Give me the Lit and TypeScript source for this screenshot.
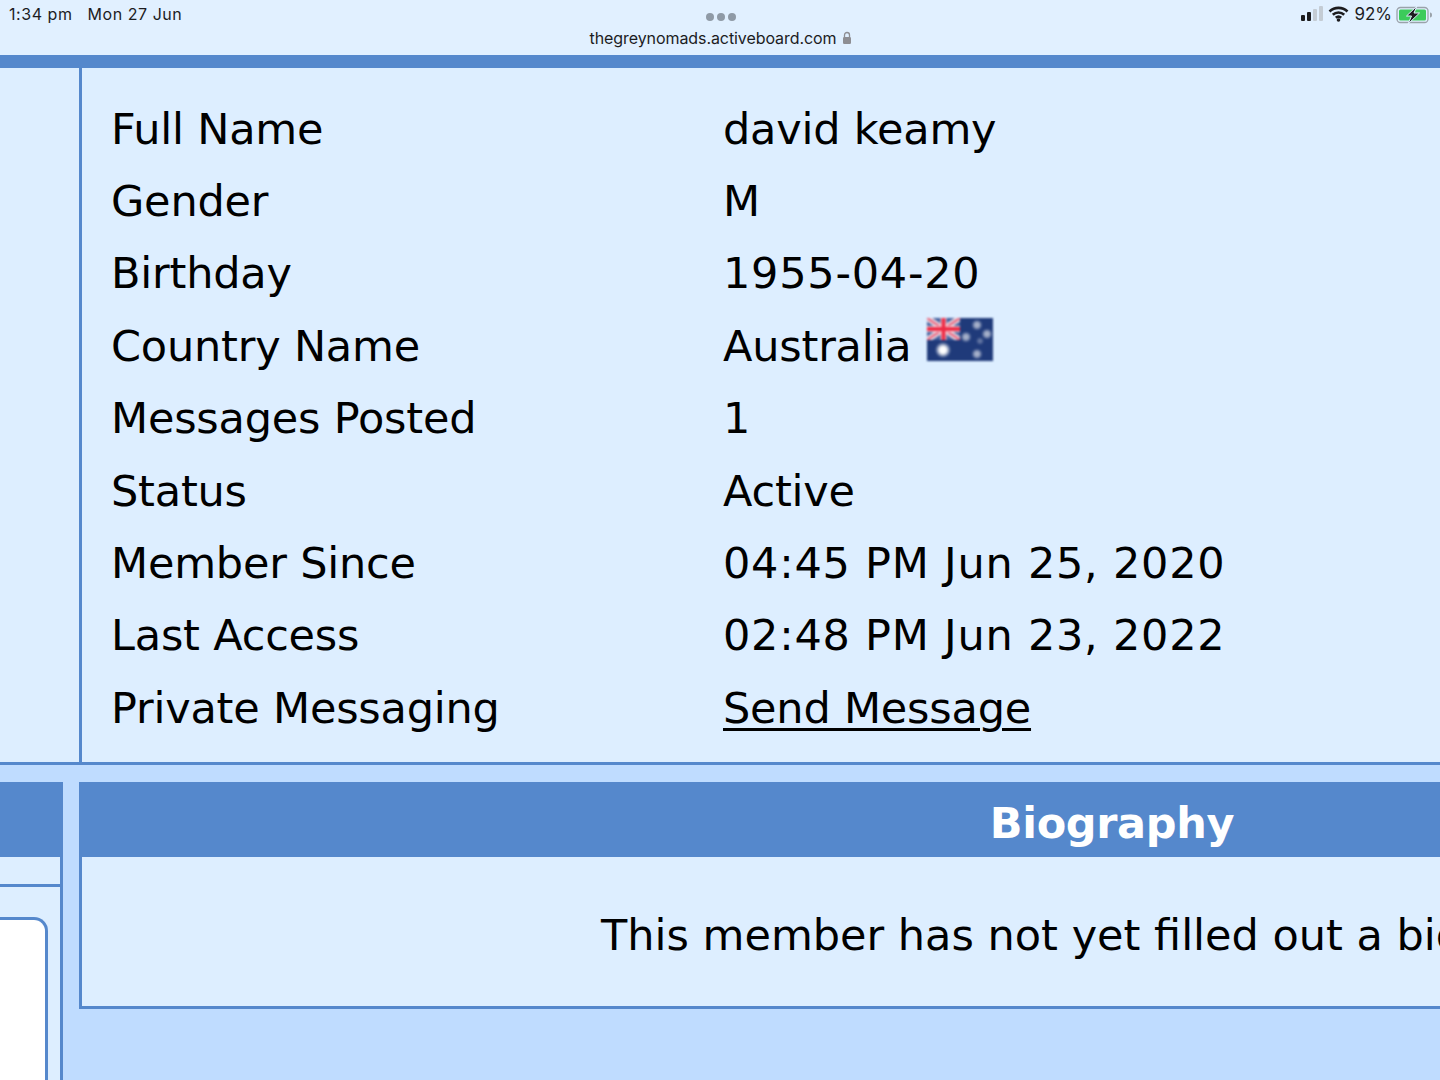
import {LitElement, html, css} from "lit"
import {customElement} from "lit/decorators.js"

const rows: [string, string][] = [
    ["Full Name", "david keamy"],
    ["Gender", "M"],
    ["Birthday", "1955-04-20"],
    ["Country Name", "Australia"],
    ["Messages Posted", "1"],
    ["Status", "Active"],
    ["Member Since", "04:45 PM Jun 25, 2020"],
    ["Last Access", "02:48 PM Jun 23, 2022"],
    ["Private Messaging", "Send Message"],
]

const flag = html`
    <svg class="flag" viewBox="0 0 66 43" aria-hidden="true">
        <defs>
            <radialGradient id="star">
                <stop offset="0.4" stop-color="#ffffff"/>
                <stop offset="1" stop-color="#ffffff" stop-opacity="0"/>
            </radialGradient>
            <clipPath id="jack"><rect width="33" height="22"/></clipPath>
        </defs>
        <rect width="66" height="43" fill="#1f3a7a"/>
        <g clip-path="url(#jack)">
            <rect width="33" height="22" fill="#3f5f9e"/>
            <path d="M0 0L33 22M33 0L0 22" stroke="#ecd8e0" stroke-width="6"/>
            <path d="M0 0L33 22M33 0L0 22" stroke="#e8607a" stroke-width="2"/>
            <path d="M16.500 0V22M0 11H33" stroke="#f4dce2" stroke-width="6"/>
            <path d="M16.500 0V22M0 11H33" stroke="#ee2b45" stroke-width="4"/>
        </g>
        <circle cx="16" cy="32" r="8" fill="url(#star)"/>
        <circle cx="50" cy="7" r="5.500" fill="url(#star)" opacity="0.6"/>
        <circle cx="39" cy="19" r="5.500" fill="url(#star)" opacity="0.6"/>
        <circle cx="60" cy="16" r="5.500" fill="url(#star)" opacity="0.6"/>
        <circle cx="53" cy="23" r="4" fill="url(#star)" opacity="0.3"/>
        <circle cx="50" cy="36" r="5.500" fill="url(#star)" opacity="0.6"/>
    </svg>
`

@customElement("app-root")
export class AppRoot extends LitElement {
    static styles = css`
        :host {
            display: block;
            width: 1440px;
            height: 1080px;
            overflow: hidden;
            background: #bfdcff;
            color: #000;
            font-family: "DejaVu Sans", Verdana, sans-serif;
        }
        .status {
            height: 55px;
            box-sizing: border-box;
            background: #e1f0ff;
            display: grid;
            grid-template-columns: 1fr auto 1fr;
            padding: 4px 7px 0 9px;
            font-family: Inter, "Liberation Sans", Arial, sans-serif;
            font-size: 16px;
            color: #1c1c1e;
        }
        .clock { display: flex; gap: 15px; line-height: 20px; letter-spacing: 0.55px; }
        .address { display: flex; flex-direction: column; align-items: center; }
        .dots { display: flex; gap: 3px; height: 8px; margin: 9px 0 7px; }
        .dots i { width: 8px; height: 8px; border-radius: 50%; background: #8f9aa6; }
        .url { display: flex; align-items: center; gap: 6px; line-height: 20px; letter-spacing: -0.08px; }
        .lock { width: 10px; height: 14px; }
        .indicators { display: flex; justify-content: flex-end; align-items: flex-start; gap: 4px; line-height: 20px; font-size: 17px; }
        .indicators svg { margin-top: 2px; flex: none; }
        .strip { height: 13px; background: #5588cc; }
        .profile {
            height: 694px;
            background: #ddeeff;
            border-bottom: 3px solid #5588cc;
            padding-left: 79px;
        }
        .details {
            height: 100%;
            box-sizing: border-box;
            border-left: 3px solid #5588cc;
            padding: 24.500px 0 0 29px;
            display: grid;
            grid-template-columns: 612px 1fr;
            grid-auto-rows: 72.375px;
            align-items: center;
            font-size: 43px;
            line-height: 50px;
            letter-spacing: -0.2px;
            white-space: nowrap;
        }
        .value { display: flex; align-items: center; gap: 16px; }
        .value.digits { letter-spacing: 0.75px; }
        .flag { width: 66px; height: 43px; margin-top: -13px; filter: blur(0.8px); }
        a { color: inherit; text-decoration: underline; text-decoration-thickness: 3px; text-underline-offset: 5px; }
        .lower {
            display: grid;
            grid-template-columns: 63px 2061px;
            column-gap: 16px;
            margin-top: 17px;
            height: 298px;
        }
        .side { display: flex; flex-direction: column; }
        .block { height: 75px; flex: none; background: #5588cc; }
        .side-body {
            flex: 1;
            background: #ddeeff;
            border-right: 3px solid #5588cc;
        }
        .side-title { height: 27px; border-bottom: 3px solid #5588cc; }
        .side-box {
            width: 48px;
            height: 300px;
            box-sizing: border-box;
            margin: 30px 0 0 0;
            background: #fff;
            border: 3px solid #5588cc;
            border-left: 0;
            border-top-right-radius: 14px;
        }
        .heading {
            height: 75px;
            background: #5588cc;
            color: #fff;
            font-size: 43px;
            font-weight: 700;
            line-height: 82px;
            letter-spacing: -0.35px;
            text-align: center;
            padding-left: 5px;
        }
        .bio {
            background: #ddeeff;
            border-left: 3px solid #5588cc;
            border-bottom: 3px solid #5588cc;
            font-size: 43px;
            line-height: 50px;
            padding-top: 53px;
            height: 96px;
            text-align: center;
            white-space: nowrap;
        }
    `

    render() {
        return html`
            <div class="status">
                <div class="clock"><span>1:34 pm</span><span>Mon 27 Jun</span></div>
                <div class="address">
                    <div class="dots"><i></i><i></i><i></i></div>
                    <div class="url">
                        thegreynomads.activeboard.com
                        <svg class="lock" viewBox="0 0 10 14" aria-hidden="true">
                            <path d="M2.500 6V4a2.500 2.500 0 0 1 5 0V6" fill="none" stroke="#8e8e93" stroke-width="1.300"/>
                            <rect x="1" y="6" width="8" height="7" rx="1.200" fill="#8e8e93"/>
                        </svg>
                    </div>
                </div>
                <div class="indicators">
                    <svg width="24" height="16" viewBox="0 0 24 16" aria-hidden="true">
                        <rect x="1" y="9" width="4" height="6" rx="1" fill="#1c1c1e"/>
                        <rect x="7" y="6" width="4" height="9" rx="1" fill="#1c1c1e"/>
                        <rect x="13" y="3" width="4" height="12" rx="1" fill="#c4ccd4"/>
                        <rect x="19" y="0" width="4" height="15" rx="1" fill="#c4ccd4"/>
                    </svg>
                    <svg width="22" height="16" viewBox="0 0 22 16" aria-hidden="true">
                        <path d="M1.500 5.500a13 13 0 0 1 18 0M4.800 8.800a8.300 8.300 0 0 1 11.400 0M7.800 11.800a4 4 0 0 1 5.400 0" fill="none" stroke="#1c1c1e" stroke-width="2.600"/>
                        <circle cx="10.500" cy="14" r="1.800" fill="#1c1c1e"/>
                    </svg>
                    <span>92%</span>
                    <svg width="37" height="18" viewBox="0 0 37 18" aria-hidden="true">
                        <rect x="1" y="1.500" width="31" height="15" rx="3.500" fill="none" stroke="#9aa2aa" stroke-width="1.300"/>
                        <rect x="3" y="3.500" width="27" height="11" rx="1.500" fill="#3ccb5a"/>
                        <path d="M34 6.500c1.500 0 2 1 2 2.500s-.5 2.500-2 2.500z" fill="#9aa2aa"/>
                        <path d="M21 0L10.500 10h5L12 18l11.500-11h-5.500z" fill="#1c1c1e" stroke="#e1f0ff" stroke-width="1"/>
                    </svg>
                </div>
            </div>
            <div class="strip"></div>
            <div class="profile">
                <div class="details">
                    ${rows.map(([label, value]) => html`
                        <div>${label}</div>
                        <div class="value ${/\d{2}/.test(value) ? "digits" : ""}">
                            ${value == "Send Message" ? html`<a href="#">${value}</a>` : html`<span>${value}</span>`}
                            ${value == "Australia" ? flag : ""}
                        </div>
                    `)}
                </div>
            </div>
            <div class="lower">
                <div class="side">
                    <div class="block"></div>
                    <div class="side-body">
                        <div class="side-title"></div>
                        <div class="side-box"></div>
                    </div>
                </div>
                <div>
                    <div class="heading">Biography</div>
                    <div class="bio">This member has not yet filled out a biography.</div>
                </div>
            </div>
        `
    }
}
